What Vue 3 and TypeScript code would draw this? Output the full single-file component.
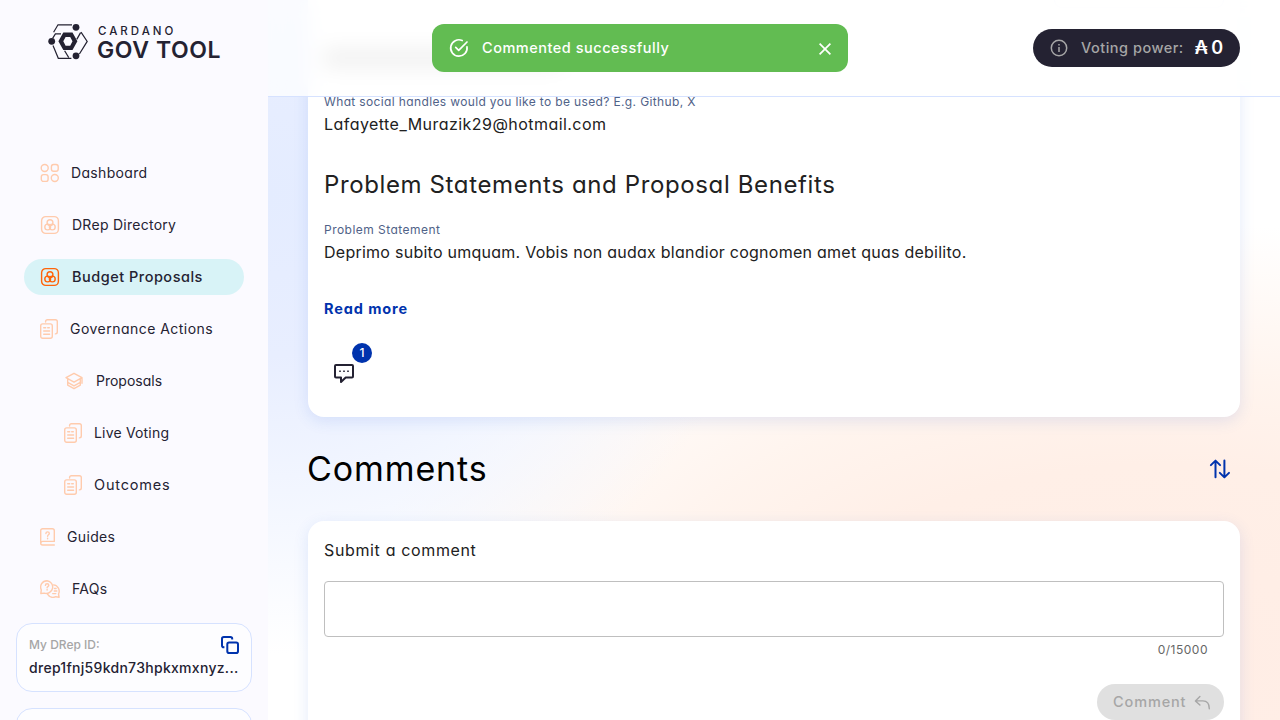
<script setup lang="ts">
import { ref } from 'vue'

type IconName = 'grid' | 'drep' | 'docs' | 'stack' | 'book' | 'faq'

interface NavItem {
  key: string
  label: string
  icon: IconName
  active?: boolean
  nested?: boolean
}

const nav: NavItem[] = [
  { key: 'dashboard', label: 'Dashboard', icon: 'grid' },
  { key: 'directory', label: 'DRep Directory', icon: 'drep' },
  { key: 'budget', label: 'Budget Proposals', icon: 'drep', active: true },
  { key: 'governance', label: 'Governance Actions', icon: 'docs' },
  { key: 'proposals', label: 'Proposals', icon: 'stack', nested: true },
  { key: 'live', label: 'Live Voting', icon: 'docs', nested: true },
  { key: 'outcomes', label: 'Outcomes', icon: 'docs', nested: true },
  { key: 'guides', label: 'Guides', icon: 'book' },
  { key: 'faqs', label: 'FAQs', icon: 'faq' },
]

const comment = ref('')
const maxLength = 15000
</script>

<template>
  <div class="app">
    <aside class="sidebar">
      <div class="logo">
        <svg class="logo-mark" width="40" height="36" viewBox="0 0 40 36" fill="none">
          <g stroke="#242232" stroke-width="1.2">
            <path d="M5.6 8.2 10 .8h14" />
            <path d="M4.6 14.4 7.4 9.9H13" />
            <path d="M33 8.2 39.2 17.4 31.4 30" />
            <path d="M32.6 8.6 28.8 15.4" />
            <path d="M5 21.6 10.3 34.3H23.4" />
            <path d="M16.6 26.8 20.8 33.6" />
          </g>
          <path fill="#242232" fill-rule="evenodd" d="M15.3 8.6h9.2l4.9 8.7-4.9 8.8h-9.2l-4.9-8.8zM17.6 12.9l-2.3 4.4 2.3 4.5h4.6l2.3-4.5-2.3-4.4z" />
          <g fill="#242232">
            <circle cx="28" cy="3.3" r="3.4" />
            <circle cx="3.7" cy="17.3" r="3.4" />
            <circle cx="28" cy="31.8" r="3.4" />
          </g>
        </svg>
        <div class="logo-text">
          <span class="logo-top">CARDANO</span>
          <span class="logo-bottom">GOV TOOL</span>
        </div>
      </div>

      <nav class="nav">
        <a v-for="item in nav" :key="item.key" class="nav-item" :class="[item.key, { active: item.active, nested: item.nested }]">
          <svg v-if="item.icon === 'grid'" class="icon" width="19" height="20" viewBox="0 0 19 20">
            <circle cx="4.7" cy="5" r="3.5" />
            <rect x="11.4" y="1.5" width="6.8" height="6.8" rx="2.2" />
            <rect x="1.3" y="11.6" width="6.8" height="6.8" rx="2.2" />
            <circle cx="14.8" cy="15" r="3.5" />
          </svg>
          <svg v-else-if="item.icon === 'drep'" class="icon" width="20" height="20" viewBox="0 0 20 20">
            <rect x="1.6" y="1.6" width="16.8" height="16.8" rx="4.2" />
            <circle cx="10" cy="7.7" r="2.9" />
            <circle cx="7.7" cy="12" r="2.9" />
            <circle cx="12.3" cy="12" r="2.9" />
          </svg>
          <svg v-else-if="item.icon === 'docs'" class="icon" width="18" height="20" viewBox="0 0 18 20">
            <path d="M5.6 3V2.4C5.6 1.4 6.3.7 7.3.7h8.1c1.1 0 1.9.8 1.9 1.9v10.5c0 1-.7 1.8-1.9 1.8" />
            <rect x=".7" y="4.9" width="11.6" height="14.4" rx="2" />
            <path d="M3.7 8.7h2M7.7 8.7h1.6M3.7 12h5.9M3.7 15.3h5.9" />
          </svg>
          <svg v-else-if="item.icon === 'stack'" class="icon" width="20" height="20" viewBox="0 0 20 20">
            <path d="M10 2.3 18 6.7l-8 4.5-8-4.5zM18 6.7v5.6M3.7 8.2v3.1L10 14.8l6.3-3.5V8.2M3.7 11.3v2.9L10 17.7l6.3-3.5v-2.9" />
          </svg>
          <svg v-else-if="item.icon === 'book'" class="icon" width="15" height="18" viewBox="0 0 15 18">
            <path d="M14.3 13.4V2.7c0-1.1-.8-2-2-2H2.6C1.5.7.7 1.6.7 2.7v12.4c0 1.2.8 1.9 1.9 1.9h11.7M.9 15c0-1 .8-1.6 1.8-1.6h11.6" />
            <path d="M5.9 5.5c0-1 .7-1.6 1.7-1.6s1.7.6 1.7 1.5c0 1.3-1.7 1.4-1.7 2.8M7.6 10.1v.6" />
          </svg>
          <svg v-else class="icon" width="20" height="18" viewBox="0 0 20 18">
            <path d="M7.1.7a6.4 6.4 0 0 0-5.8 9.2L.8 13.5l3.4-.4A6.4 6.4 0 1 0 7.1.7z" />
            <path d="M13.5 4.9a6.3 6.3 0 0 1 5 9.1l.6 3.2-3.3-.5a6.3 6.3 0 0 1-8.1-2.3" />
            <path d="M5.4 5.4c0-1 .7-1.6 1.7-1.6s1.7.6 1.7 1.5c0 1.3-1.7 1.3-1.7 2.5M7.1 9.4v.6M14.5 8.5h1.6M14.3 11h2.5M12.7 13.6h3.1" />
          </svg>
          <span class="nav-label">{{ item.label }}</span>
        </a>
      </nav>

      <section class="id-card">
        <div class="id-head">
          <span class="id-title">My DRep ID:</span>
          <svg class="copy" width="20" height="20" viewBox="0 0 20 20" fill="none" stroke="#0033ad" stroke-width="2" stroke-linejoin="round">
            <rect x="7.3" y="7.6" width="10.7" height="10.4" rx="1.8" />
            <path d="M4.4 12.2h-.6A1.8 1.8 0 0 1 2 10.4V3.8C2 2.8 2.8 2 3.8 2h6.6c1 0 1.8.8 1.8 1.8v.6" />
          </svg>
        </div>
        <span class="id-value">drep1fnj59kdn73hpkxmxnyz...</span>
      </section>
      <section class="id-card next"></section>
    </aside>

    <main class="main">
      <section class="card proposal">
        <div class="under-header">
          <span class="outline-pill"></span>
          <span class="heading-haze"></span>
        </div>
        <span class="label handles">What social handles would you like to be used? E.g. Github, X</span>
        <span class="value email">Lafayette_Murazik29@hotmail.com</span>
        <h2 class="section-title">Problem Statements and Proposal Benefits</h2>
        <span class="label statement">Problem Statement</span>
        <span class="value statement-text">Deprimo subito umquam. Vobis non audax blandior cognomen amet quas debilito.</span>
        <a class="read-more">Read more</a>
        <div class="comment-count">
          <svg width="24" height="24" viewBox="0 0 24 24" fill="none" stroke="#242232" stroke-width="2" stroke-linejoin="round">
            <path d="M3 3h16c.6 0 1 .4 1 1v10.5c0 .6-.4 1-1 1h-6.3L8 20v-4.5H3c-.6 0-1-.4-1-1V4c0-.6.4-1 1-1z" />
            <path d="M6.2 9.3h1.6M10.2 9.3h1.6M14.2 9.3h1.6" stroke-width="1.6" />
          </svg>
          <span class="badge">1</span>
        </div>
      </section>

      <div class="comments-head">
        <h1>Comments</h1>
        <svg class="sort" width="24" height="24" viewBox="0 0 24 24" fill="none" stroke="#0033ad" stroke-width="2" stroke-linecap="round" stroke-linejoin="round">
          <path d="M7.5 20.3V3.7M2.9 8.1l4.6-4.5 4.6 4.5M16.4 3.5v16.8M11.8 15.9l4.6 4.5 4.6-4.5" />
        </svg>
      </div>

      <section class="card submit">
        <span class="value submit-title">Submit a comment</span>
        <textarea v-model="comment" class="field" :maxlength="maxLength"></textarea>
        <span class="counter">{{ comment.length }}/{{ maxLength }}</span>
        <button class="comment-btn" disabled>
          <span>Comment</span>
          <svg width="18" height="18" viewBox="0 0 18 18" fill="none" stroke="#a6a6a6" stroke-width="1.4" stroke-linecap="round" stroke-linejoin="round">
            <path d="M5.9 3.6 1.4 7.9l4.5 4.2M1.6 7.9h7.3c4.2 0 6.4 2.9 6.4 7.8" />
          </svg>
        </button>
      </section>
    </main>

    <header class="topbar">
      <div class="power">
        <svg width="18" height="18" viewBox="0 0 18 18" fill="none" stroke="#a6a6a6" stroke-width="1.5">
          <circle cx="9" cy="9" r="7.7" />
          <path d="M9 8v5M9 4.9v1.6" />
        </svg>
        <span class="power-label">Voting power:</span>
        <span class="power-value">₳ 0</span>
      </div>
    </header>

    <div class="toast">
      <svg width="20" height="20" viewBox="0 0 20 20" fill="none" stroke="#fff" stroke-width="1.7" stroke-linecap="round" stroke-linejoin="round">
        <path d="M18 8.8A8.2 8.2 0 1 1 13.2 2.5M6.7 9.3l3 3L18 4" />
      </svg>
      <span class="toast-text">Commented successfully</span>
      <svg class="close" width="14" height="14" viewBox="0 0 14 14" stroke="#fff" stroke-width="1.7">
        <path d="m1.6 1.6 10.8 10.8M12.4 1.6 1.6 12.4" />
      </svg>
    </div>
  </div>
</template>

<style>
html,
body {
  margin: 0;
  height: 100%;
  overflow: hidden;
}
</style>

<style scoped>
.app {
  position: relative;
  display: flex;
  width: 1280px;
  height: 720px;
  overflow: hidden;
  font-family: Inter, 'Open Sans', sans-serif;
  font-feature-settings: 'cv11';
  color: #212121;
  white-space: nowrap;
}

.app * {
  box-sizing: border-box;
}

.app svg {
  flex: none;
}

.sidebar {
  flex: none;
  display: flex;
  flex-direction: column;
  width: 268px;
  height: 720px;
  overflow: hidden;
  background: #fbfaff;
}

.logo {
  display: flex;
  gap: 9px;
  height: 155px;
  padding: 24px 0 0 48px;
  flex: none;
}

.logo-mark {
  overflow: visible;
}

.logo-text {
  display: flex;
  flex-direction: column;
  color: #242232;
}

.logo-top {
  height: 14px;
  padding-left: 1px;
  font-size: 11.5px;
  font-weight: 500;
  line-height: 14px;
  letter-spacing: 3px;
}

.logo-bottom {
  height: 24px;
  font-size: 23px;
  font-weight: 600;
  line-height: 25px;
  letter-spacing: 0.6px;
}

.nav {
  display: flex;
  flex-direction: column;
  gap: 16px;
  padding: 0 24px;
}

.nav-item {
  display: flex;
  align-items: center;
  gap: 12px;
  height: 36px;
  padding-left: 16px;
  border-radius: 18px;
  color: #242232;
  font-size: 14px;
}

.nav-label {
  padding-bottom: 2px;
}

.nav-item.nested {
  padding-left: 40px;
}

.nav-item.active {
  background: #d8f3f7;
  font-weight: 500;
}

.icon {
  fill: none;
  stroke: #ffcbad;
  stroke-width: 1.4;
  stroke-linecap: round;
  stroke-linejoin: round;
}

.active .icon {
  stroke: #ff640a;
}

.dashboard { letter-spacing: 0.33px; }
.directory { letter-spacing: 0.27px; }
.nav-item.budget { font-size: 14.5px; letter-spacing: 0.5px; }
.governance { letter-spacing: 0.47px; }
.proposals { letter-spacing: 0; }
.live { letter-spacing: 0.18px; }
.nav-item.outcomes { font-size: 14.5px; letter-spacing: 0.8px; }
.guides { letter-spacing: 0.35px; }
.faqs { letter-spacing: 0.25px; }

.id-card {
  flex: none;
  height: 69px;
  margin: 16px 16px 0;
  padding: 11px 12px;
  border: 1px solid #d6e2ff;
  border-radius: 16px;
  background: #fdfdff;
}

.id-head {
  display: flex;
  align-items: center;
  justify-content: space-between;
  height: 20px;
}

.id-title {
  padding-bottom: 2px;
  color: #a6a6a6;
  font-size: 12px;
  font-weight: 500;
}

.copy {
  margin-right: -1px;
}

.id-value {
  display: block;
  color: #242232;
  font-size: 14px;
  font-weight: 500;
  line-height: 26px;
  letter-spacing: 0.29px;
}

.main {
  flex: 1;
  padding: 0 40px;
  background:
    radial-gradient(ellipse 500px 460px at 0% 27%, #e4ecff 0%, #e8eeff 35%, rgba(238, 243, 255, 0.75) 65%, rgba(255, 255, 255, 0) 100%),
    radial-gradient(ellipse 820px 440px at 88% 92%, #ffede5 0%, #ffefe7 45%, rgba(255, 243, 236, 0.9) 65%, rgba(255, 255, 255, 0) 100%),
    #fff;
}

.card {
  display: flex;
  flex-direction: column;
  align-items: flex-start;
  padding: 0 16px;
  background: #fff;
  box-shadow: 0 4px 15px rgba(47, 98, 220, 0.13);
}

.proposal {
  height: 417px;
  border-radius: 0 0 16px 16px;
}

.under-header {
  display: flex;
  flex-direction: column;
  width: 100%;
  height: 92px;
}

.outline-pill {
  align-self: flex-end;
  width: 170px;
  height: 8px;
  border: 1px solid #e8eeff;
  border-top: 0;
  border-radius: 0 0 20px 20px;
}

.heading-haze {
  width: 238px;
  height: 20px;
  margin-top: 40px;
  background: rgba(33, 33, 33, 0.25);
}

.label {
  color: #506288;
  font-size: 12px;
  line-height: 20px;
}

.value {
  font-size: 16px;
  line-height: 24px;
}

.handles { letter-spacing: 0.36px; }
.email { margin-bottom: 1px; letter-spacing: 0.45px; }

.section-title {
  margin: 32px 0 0;
  font-size: 24px;
  font-weight: 400;
  line-height: 32px;
  letter-spacing: 0.62px;
}

.statement { margin-top: 19px; letter-spacing: 0.47px; }
.statement-text { margin-bottom: 1px; letter-spacing: 0.255px; }

.read-more {
  margin-top: 34px;
  color: #0033ad;
  font-size: 14.5px;
  font-weight: 700;
  line-height: 20px;
  letter-spacing: 0.9px;
}

.comment-count {
  position: relative;
  margin: 43px 0 0 9px;
  height: 24px;
}

.badge {
  position: absolute;
  left: 19px;
  top: -19px;
  width: 20px;
  height: 20px;
  border-radius: 50%;
  background: #0033ad;
  color: #fff;
  font-size: 12px;
  font-weight: 500;
  line-height: 20px;
  text-align: center;
}

.comments-head {
  display: flex;
  align-items: center;
  justify-content: space-between;
  height: 104px;
  padding-right: 8px;
}

.comments-head h1 {
  margin: 0 0 2px -1px;
  color: #000;
  font-size: 34px;
  font-weight: 400;
  letter-spacing: 0.9px;
}

.submit {
  height: 240px;
  border-radius: 16px 16px 0 0;
}

.submit-title {
  margin: 17px 0 1px;
  letter-spacing: 0.64px;
}

.field {
  width: 100%;
  height: 56px;
  margin-top: 18px;
  border: 1px solid #bfbfbf;
  border-radius: 4px;
  background: transparent;
  resize: none;
  outline: none;
}

.counter {
  align-self: flex-end;
  margin: 3px 16px 0 0;
  color: #666;
  font-size: 12px;
  line-height: 20px;
  letter-spacing: 0.5px;
}

.comment-btn {
  display: flex;
  align-items: center;
  align-self: flex-end;
  gap: 8px;
  width: 127px;
  height: 36px;
  margin-top: 24px;
  padding: 0 0 0 16px;
  border: 0;
  border-radius: 18px;
  background: #e0e0e0;
  color: #a6a6a6;
  font: inherit;
  font-size: 14.5px;
  font-weight: 500;
  letter-spacing: 0.87px;
  flex: none;
}

.comment-btn span {
  padding-bottom: 1px;
}

.topbar {
  position: absolute;
  top: 0;
  left: 268px;
  right: 0;
  display: flex;
  align-items: center;
  justify-content: flex-end;
  height: 97px;
  padding-right: 40px;
  border-bottom: 1px solid #d6e2ff;
  background: rgba(255, 255, 255, 0.75);
  backdrop-filter: blur(10px);
}

.power {
  display: flex;
  align-items: center;
  width: 207px;
  height: 38px;
  padding-left: 17px;
  border-radius: 19px;
  background: #242232;
}

.power-label {
  margin-left: 13px;
  padding-bottom: 1px;
  color: #a6a6a6;
  font-size: 14.5px;
  font-weight: 500;
  letter-spacing: 0.5px;
}

.power-value {
  margin-left: 11px;
  padding-bottom: 1px;
  color: #fff;
  font-size: 18px;
  font-weight: 600;
  letter-spacing: -0.5px;
}

.toast {
  position: absolute;
  top: 24px;
  left: 432px;
  display: flex;
  align-items: center;
  width: 416px;
  height: 48px;
  padding: 0 16px 0 17px;
  border-radius: 12px;
  background: #62bc52;
  color: #fff;
}

.toast-text {
  margin-left: 13px;
  padding-bottom: 1px;
  font-size: 14.5px;
  font-weight: 500;
  letter-spacing: 0.52px;
}

.close {
  margin: 2px 0 0 auto;
}
</style>
